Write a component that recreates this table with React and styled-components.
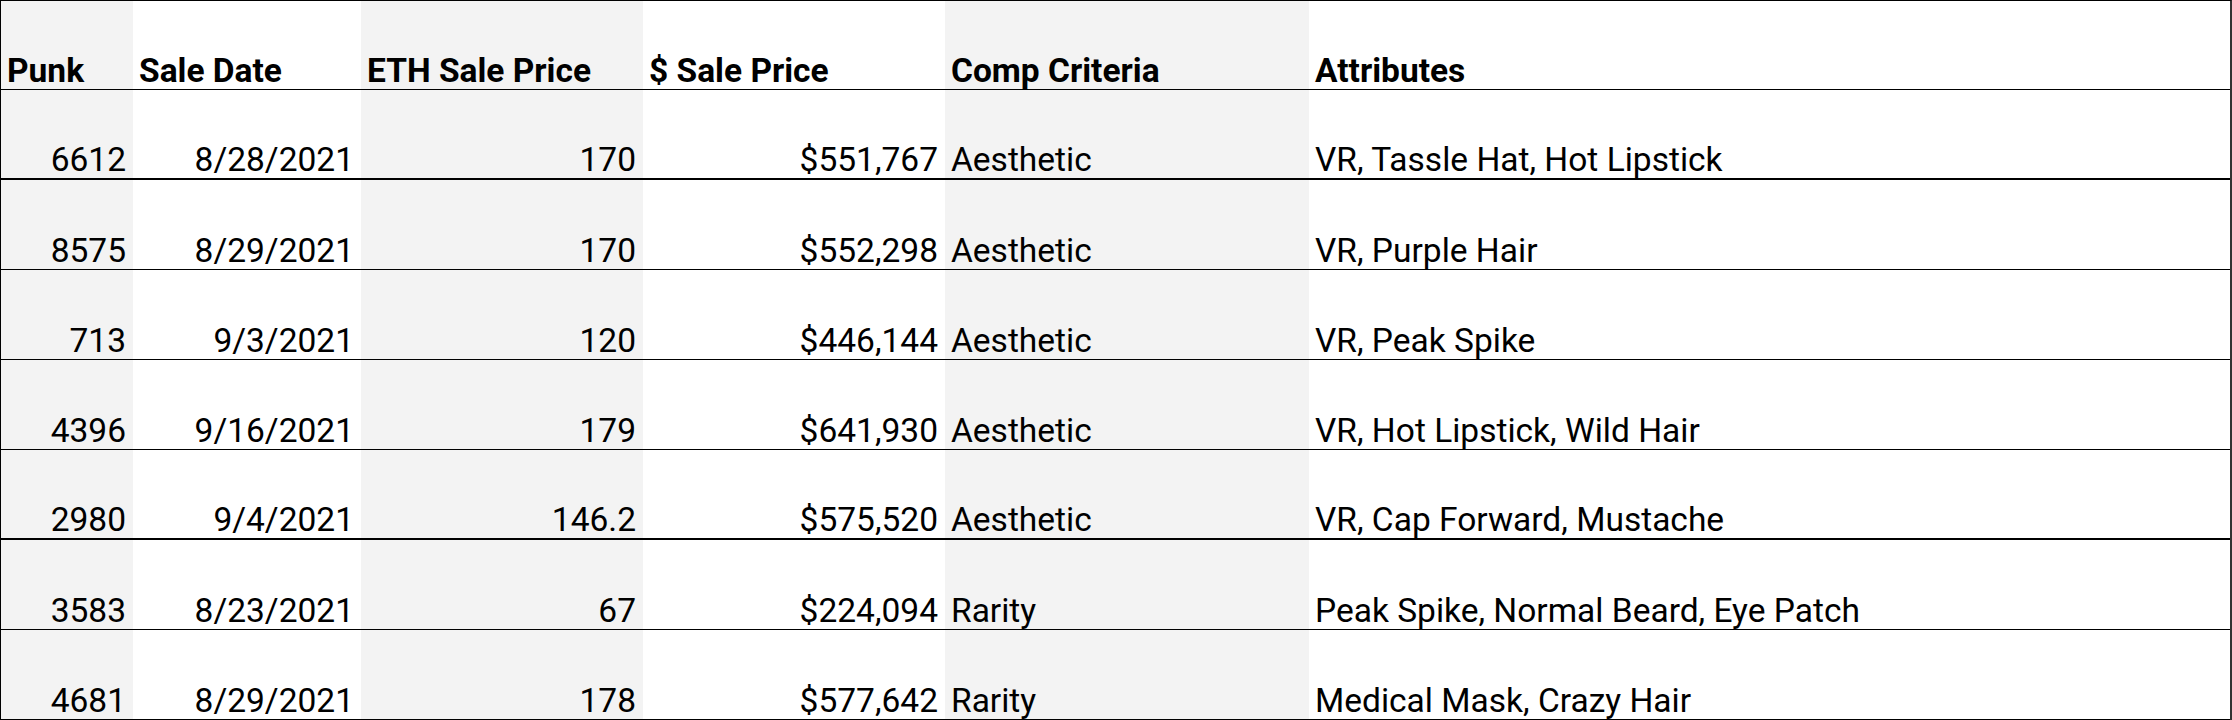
import React from 'react';
import styled, { createGlobalStyle } from 'styled-components';

const GlobalStyle = createGlobalStyle`
  html, body {
    margin: 0;
    padding: 0;
    background: #ffffff;
  }
  body {
    font-family: Roboto, 'Liberation Sans', Arial, sans-serif;
    color: #000000;
  }
`;

// --- Data ---
const columns = [
  { key: 'punk', label: 'Punk', align: 'right', shaded: true },
  { key: 'date', label: 'Sale Date', align: 'right', shaded: false },
  { key: 'eth', label: 'ETH Sale Price', align: 'right', shaded: true },
  { key: 'usd', label: '$ Sale Price', align: 'right', shaded: false },
  { key: 'criteria', label: 'Comp Criteria', align: 'left', shaded: true },
  { key: 'attrs', label: 'Attributes', align: 'left', shaded: false },
];

const rows = [
  { punk: '6612', date: '8/28/2021', eth: '170', usd: '$551,767', criteria: 'Aesthetic', attrs: 'VR, Tassle Hat, Hot Lipstick', thick: true },
  { punk: '8575', date: '8/29/2021', eth: '170', usd: '$552,298', criteria: 'Aesthetic', attrs: 'VR, Purple Hair' },
  { punk: '713', date: '9/3/2021', eth: '120', usd: '$446,144', criteria: 'Aesthetic', attrs: 'VR, Peak Spike' },
  { punk: '4396', date: '9/16/2021', eth: '179', usd: '$641,930', criteria: 'Aesthetic', attrs: 'VR, Hot Lipstick, Wild Hair' },
  { punk: '2980', date: '9/4/2021', eth: '146.2', usd: '$575,520', criteria: 'Aesthetic', attrs: 'VR, Cap Forward, Mustache', thick: true },
  { punk: '3583', date: '8/23/2021', eth: '67', usd: '$224,094', criteria: 'Rarity', attrs: 'Peak Spike, Normal Beard, Eye Patch' },
  { punk: '4681', date: '8/29/2021', eth: '178', usd: '$577,642', criteria: 'Rarity', attrs: 'Medical Mask, Crazy Hair' },
];

// --- Styled Components ---
const Sheet = styled.div`
  width: 2232px;
  box-sizing: border-box;
  border-top: 1px solid #000;
  border-left: 1px solid #000;
  border-right: 2px solid #333;
`;

const Row = styled.div`
  display: grid;
  grid-template-columns: 132px 228px 282px 302px 364px 1fr;
  height: 90px;
  box-sizing: border-box;
  border-bottom: ${(p) => (p.$thick ? '2px' : '1px')} solid #000;
  &:first-child {
    height: 89px;
  }
`;

const Cell = styled.div`
  display: flex;
  align-items: flex-end;
  justify-content: ${(p) => (p.$align === 'right' ? 'flex-end' : 'flex-start')};
  padding: 0 7px 2px 6px;
  background: ${(p) => (p.$shaded ? '#f3f3f3' : '#ffffff')};
  font-size: 33.5px;
  line-height: 1;
  font-weight: ${(p) => (p.$bold ? 700 : 400)};
  white-space: nowrap;
  overflow: hidden;
`;

// --- Main Component ---
const App = () => (
  <>
    <GlobalStyle />
    <Sheet>
      <Row>
        {columns.map((c) => (
          <Cell key={c.key} $shaded={c.shaded} $bold>
            {c.label}
          </Cell>
        ))}
      </Row>
      {rows.map((r) => (
        <Row key={r.punk} $thick={r.thick}>
          {columns.map((c) => (
            <Cell key={c.key} $shaded={c.shaded} $align={c.align}>
              {r[c.key]}
            </Cell>
          ))}
        </Row>
      ))}
    </Sheet>
  </>
);

export default App;
